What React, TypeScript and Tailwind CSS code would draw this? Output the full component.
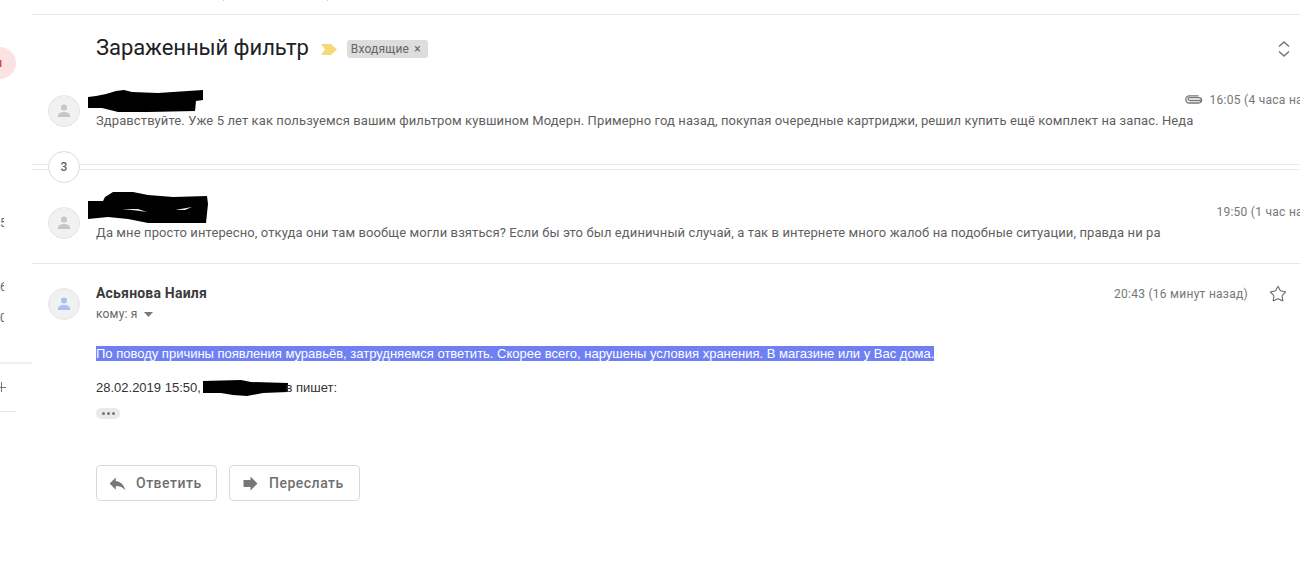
import React from 'react';
import { Star } from 'lucide-react';

const roboto = 'font-["Roboto",sans-serif]';

const Avatar = ({ blue }: { blue?: boolean }) => (
    <div className="w-[32px] h-[32px] shrink-0 rounded-full bg-[#f1f1f3] border border-[#e6e6e8] flex items-center justify-center">
        <svg width="14" height="14" viewBox="0 0 14 14" fill={blue ? '#a8c0f2' : '#c6c6c6'}>
            <circle cx="7" cy="3.6" r="3" />
            <path d="M1 13v-1.6C1 9.4 4.2 8 7 8s6 1.4 6 3.4V13z" />
        </svg>
    </div>
);

const NameBlobOne = () => (
    <svg width="116" height="22" viewBox="0 0 116 22" className="block">
        <path d="M0 7 L8 6 L18 4 L28 1 L36 0 L44 2 L70 3 L115 0 L115 10 L108 11 L107 21 L60 22 L30 22 L22 20 L14 18 L0 18 Z" fill="#000" />
    </svg>
);

const NameBlobTwo = () => (
    <svg width="121" height="32" viewBox="0 0 121 32" className="block">
        <path d="M0 9 L15 9 L17 5 L25 0 L45 0 L60 3 L85 5 L119 4 L120 12 L118 31 L85 31 L60 31 L40 27 L20 25 L0 27 Z" fill="#000" />
        <path d="M34 17 L50 17 L59 20 L48 18.5 Z M87 18 L104 15 L97 18 Z" fill="#e8e8e8" />
    </svg>
);

const InlineBlob = () => (
    <svg width="85" height="16" viewBox="0 0 85 16" className="inline-block align-[-4px] ml-[-1px]">
        <path d="M0 1 L38 0 L48 2 L85 3 L85 12 L60 13 L44 16 L30 15 L18 13 L0 13 Z" fill="#000" />
    </svg>
);

const Paperclip = () => (
    <svg width="18" height="9" viewBox="0 0 18 9" fill="none" stroke="#777" strokeWidth="1.3" className="block mt-[-2px]">
        <path d="M17 5.5 H5 C3.4 5.5 3 4.6 3 4 C3 3.2 3.6 2.6 4.6 2.6 H13.6 C15.6 2.6 16.6 3.6 16.6 4.8 C16.6 6.6 15.4 8 13.4 8 H4.4 C2.2 8 0.8 6.4 0.8 4.4 C0.8 2.4 2.2 0.8 4.4 0.8 H13.6" />
    </svg>
);

const Sidebar = () => (
    <div className={`w-[32px] shrink-0 h-full overflow-hidden flex flex-col items-start text-[#666] text-[12px] ${roboto}`}>
        <div className="mt-[47px] ml-[-16px] w-[32px] h-[32px] rounded-full bg-[#fbe3e3] flex items-center justify-end overflow-hidden">
            <span className="text-[#e5323f] text-[12px] font-medium mr-[14px] leading-none">н</span>
        </div>
        <div className="mt-[137px] w-[4px] overflow-hidden leading-[14px] h-[14px]">5</div>
        <div className="mt-[50px] w-[4px] overflow-hidden leading-[14px] h-[14px]">6</div>
        <div className="mt-[17px] w-[4px] overflow-hidden leading-[14px] h-[14px]">0</div>
        <div className="mt-[37px] w-[32px] h-[2px] bg-[#f0f0f0]" />
        <div className="mt-[17px] w-[6px] h-[12px] relative flex items-center">
            <div className="w-[6px] h-[1px] bg-[#777]" />
            <div className="absolute left-[1px] top-[1px] w-[1px] h-[10px] bg-[#777]" />
        </div>
        <div className="mt-[18px] w-[16px] h-[1px] bg-[#e6e6e6]" />
    </div>
);

const CollapsedRow = ({
    blob,
    height,
    snippet,
    time,
    clip,
    timeTop,
    avatarTop,
}: {
    blob: React.ReactNode;
    height: string;
    snippet: string;
    time: string;
    clip?: boolean;
    timeTop: string;
    avatarTop: string;
}) => (
    <div className={`flex pl-[16px] ${height}`}>
        <div className={avatarTop}>
            <Avatar />
        </div>
        <div className="flex-1 min-w-0 ml-[8px]">
            {blob}
            <div className="ml-[8px] mt-[1px] text-[13px] leading-[16px] tracking-[0.1px] text-[#5f5f5f] whitespace-nowrap">{snippet}</div>
        </div>
        <div className={`absolute right-[-28px] flex items-center gap-[7px] text-[12px] leading-[16px] tracking-[0.27px] text-[#777] whitespace-nowrap ${timeTop}`}>
            {clip && <Paperclip />}
            <span>{time}</span>
        </div>
    </div>
);

const Button = ({ icon, label, w }: { icon: React.ReactNode; label: string; w: string }) => (
    <button className={`h-[36px] ${w} rounded-[4px] border border-[#d9d9d9] bg-white flex items-center pl-[10px] text-[14px] tracking-[0.5px] font-medium text-[#6f6f6f] font-["Roboto",sans-serif]`}>
        {icon}
        <span className="ml-[8px]">{label}</span>
    </button>
);

export default function App() {
    return (
        <div className={`w-[1300px] h-[563px] overflow-hidden bg-white flex ${roboto}`}>
            <Sidebar />
            <div className="flex-1 min-w-0 relative">
                <div className="h-[15px] border-b border-[#e8e8e8] relative">
                    <div className="absolute top-0 left-[191px] w-[1px] h-[1px] bg-[#ccc]" />
                    <div className="absolute top-0 left-[295px] w-[1px] h-[1px] bg-[#ccc]" />
                </div>

                <div className="h-[75px] pl-[64px] pr-[8px] pt-[19px] flex items-start">
                    <h1 className="text-[22px] leading-[28px] tracking-[-0.06px] text-[#202124] font-normal">Зараженный фильтр</h1>
                    <svg width="16" height="11" viewBox="0 0 16 11" className="ml-[12px] mt-[10px]">
                        <path d="M0 0 H10 L16 5.5 L10 11 H0 L4 5.5 Z" fill="#f6d87a" />
                    </svg>
                    <div className="ml-[10px] mt-[6px] h-[18px] w-[81px] rounded-[3px] bg-[#dddddd] flex items-center pl-[4px] text-[12px] tracking-[0.2px] text-[#666]">
                        Входящие
                        <span className="ml-[5px] text-[#666] text-[12px] leading-none">×</span>
                    </div>
                    <svg width="14" height="18" viewBox="0 0 14 18" fill="none" stroke="#757575" strokeWidth="1.6" className="ml-auto mt-[6px] mr-[1px]">
                        <path d="M2 6.5 L7 2 L12 6.5 M2 11.5 L7 16 L12 11.5" />
                    </svg>
                </div>

                <div className="relative">
                    <CollapsedRow
                        blob={<NameBlobOne />}
                        height="h-[61px]"
                        avatarTop="mt-[5px]"
                        timeTop="top-[2px]"
                        clip
                        snippet="Здравствуйте. Уже 5 лет как пользуемся вашим фильтром кувшином Модерн. Примерно год назад, покупая очередные картриджи, решил купить ещё комплект на запас. Неда"
                        time="16:05 (4 часа назад)"
                    />
                </div>

                <div className="relative h-[32px] flex items-center pl-[16px]">
                    <div className="absolute left-0 right-0 top-[13px] h-[1px] bg-[#ebebeb]" />
                    <div className="absolute left-0 right-0 top-[18px] h-[1px] bg-[#ebebeb]" />
                    <div className="relative w-[32px] h-[32px] rounded-full bg-white border border-[#dcdcdc] flex items-center justify-center text-[12px] font-medium text-[#5f5f5f]">3</div>
                </div>

                <div className="relative mt-[9px]">
                    <CollapsedRow
                        blob={<NameBlobTwo />}
                        height="h-[71px]"
                        avatarTop="mt-[15px]"
                        timeTop="top-[12px]"
                        snippet="Да мне просто интересно, откуда они там вообще могли взяться? Если бы это был единичный случай, а так в интернете много жалоб на подобные ситуации, правда ни ра"
                        time="19:50 (1 час назад)"
                    />
                </div>

                <div className="border-t border-[#e8e8e8] pt-[23px] pl-[16px] pr-[13px] flex items-start">
                    <div className="mt-[1px]">
                        <Avatar blue />
                    </div>
                    <div className="ml-[16px] flex-1 min-w-0">
                        <div className="text-[14px] leading-[12px] tracking-[0.2px] font-bold text-[#3c3c3c]">Асьянова Наиля</div>
                        <div className="mt-[8px] text-[12px] leading-[14px] tracking-[0.2px] text-[#666] flex items-center">
                            кому: я
                            <svg width="9" height="5" viewBox="0 0 9 5" className="ml-[6px]"><path d="M0 0 H9 L4.5 5 Z" fill="#777" /></svg>
                        </div>
                    </div>
                    <div className="text-[12px] leading-[16px] tracking-[0.27px] text-[#777] whitespace-nowrap mt-[-1px]">20:43 (16 минут назад)</div>
                    <Star size={18} strokeWidth={1.4} color="#666" className="ml-[21px] mt-[-2px]" />
                </div>

                <div className='pl-[64px] mt-[25px] font-["Liberation_Sans",Arial,sans-serif] text-[13px]'>
                    <div className="w-fit h-[15px] leading-[15px] bg-[#6f80f5] text-white whitespace-nowrap">
                        По поводу причины появления муравьёв, затрудняемся ответить. Скорее всего, нарушены условия хранения. В магазине или у Вас дома.
                    </div>
                    <div className="mt-[19px] h-[15px] leading-[15px] text-[#333] whitespace-nowrap">
                        28.02.2019 15:50, <InlineBlob /><span className="ml-[-3px]">в пишет:</span>
                    </div>
                    <div className="mt-[13px] w-[24px] h-[11px] rounded-[6px] bg-[#e8eaed] flex items-center justify-center gap-[2px]">
                        <span className="w-[3px] h-[3px] rounded-full bg-[#777]" />
                        <span className="w-[3px] h-[3px] rounded-full bg-[#777]" />
                        <span className="w-[3px] h-[3px] rounded-full bg-[#777]" />
                    </div>
                    <div className="mt-[46px] flex gap-[12px]">
                        <Button
                            w="w-[121px]"
                            label="Ответить"
                            icon={<svg width="21" height="21" viewBox="0 0 24 24" fill="#777"><path d="M10 9V5l-7 7 7 7v-4.1c5 0 8.5 1.6 11 5.1-1-5-4-10-11-11z" /></svg>}
                        />
                        <Button
                            w="w-[131px]"
                            label="Переслать"
                            icon={<svg width="21" height="21" viewBox="0 0 24 24" fill="#777"><path d="M12 8V4l8 8-8 8v-4H4V8z" /></svg>}
                        />
                    </div>
                </div>
            </div>
        </div>
    );
}
